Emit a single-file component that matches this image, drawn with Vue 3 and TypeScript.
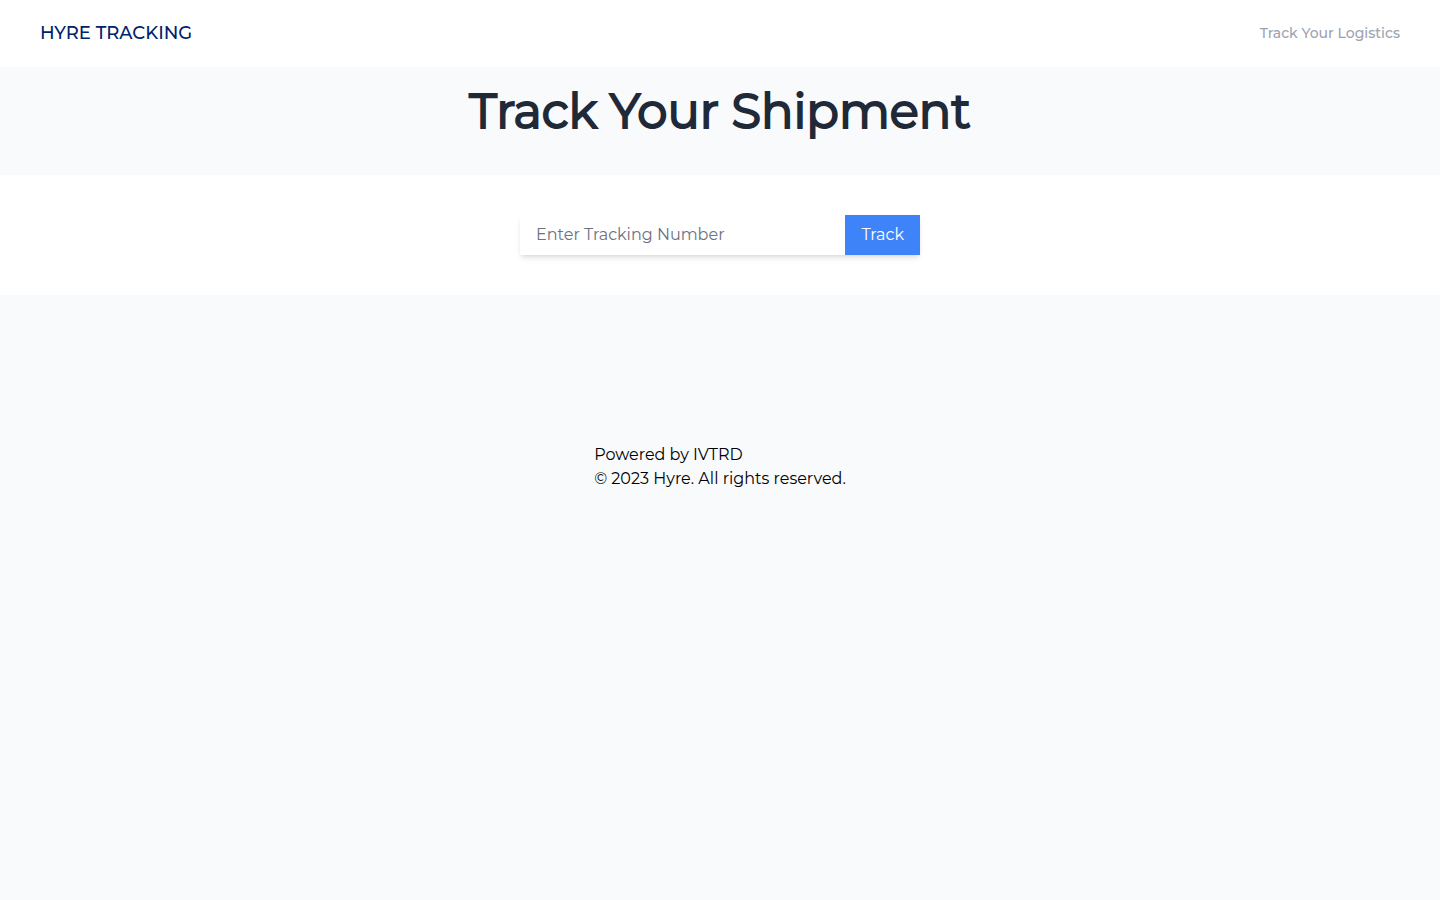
<script setup lang="ts">
import { ref } from 'vue'

const trackingNumber = ref<string>('')
</script>

<template>
  <div class="page">
    <header class="navbar">
      <a class="brand" href="#">HYRE TRACKING</a>
      <nav>
        <a class="nav-link" href="#">Track Your Logistics</a>
      </nav>
    </header>
    <main>
      <section class="hero">
        <h1>Track Your Shipment</h1>
      </section>
      <section class="search">
        <form class="search-form" @submit.prevent>
          <input
            v-model="trackingNumber"
            type="text"
            aria-label="Tracking number"
            placeholder="Enter Tracking Number"
          />
          <button type="submit">Track</button>
        </form>
      </section>
    </main>
    <footer class="footer">
      <div>
        <p>Powered by IVTRD</p>
        <p>© 2023 Hyre. All rights reserved.</p>
      </div>
    </footer>
  </div>
</template>

<style>
body {
  margin: 0;
  background: #f9fafc;
}
</style>

<style scoped>
.page {
  min-height: 100vh;
  background: #f9fafc;
  color: #000;
  font-family: Montserrat, Inter, sans-serif;
  font-size: 16px;
  line-height: 24px;
}

.navbar {
  display: flex;
  align-items: center;
  justify-content: space-between;
  padding: 20px 40px;
  background: #fff;
}

.brand {
  color: #00226b;
  font-size: 18px;
  font-weight: 500;
  line-height: 27px;
  text-decoration: none;
}

.nav-link {
  display: block;
  color: #9ca3af;
  font-size: 14px;
  font-weight: 500;
  line-height: 21px;
  text-decoration: none;
}

.hero {
  padding: 20px 16px 40px;
  text-align: center;
}

h1 {
  margin: 0;
  color: #1f2937;
  font-size: 48px;
  font-weight: 400;
  line-height: 48px;
  -webkit-text-stroke: 2px #1f2937;
}

.search {
  display: flex;
  justify-content: center;
  padding: 40px 16px;
  background: #fff;
}

.search-form {
  display: flex;
  width: 100%;
  max-width: 400px;
  box-shadow: 0 4px 6px -1px rgba(0, 0, 0, 0.1), 0 2px 4px -2px rgba(0, 0, 0, 0.1);
}

input {
  flex: 1;
  min-width: 0;
  box-sizing: border-box;
  padding: 8px 16px;
  border: 0;
  outline: 0;
  background: #fff;
  color: #000;
  font: inherit;
}

input::placeholder {
  color: #6b7280;
  opacity: 1;
}

button {
  padding: 8px 16px;
  border: 0;
  background: #3f83f8;
  color: #fff;
  font: inherit;
  cursor: pointer;
}

.footer {
  display: flex;
  justify-content: center;
  padding: 148px 16px 40px;
}

p {
  margin: 0;
}
</style>
